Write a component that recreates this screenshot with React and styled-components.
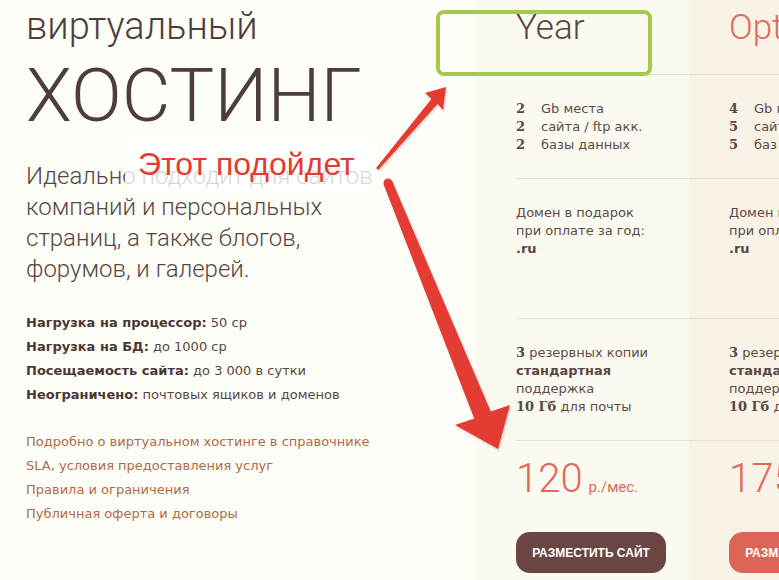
import React from "react";
import styled, { createGlobalStyle } from "styled-components";

const GlobalStyle = createGlobalStyle`
  html, body {
    margin: 0;
    padding: 0;
    background: #fefef8;
  }
  body {
    width: 779px;
    height: 580px;
    overflow: hidden;
    font-family: "DejaVu Sans", Verdana, sans-serif;
  }
`;

const plans = [
  {
    name: "Year",
    accent: false,
    specs: [
      ["2", "Gb места"],
      ["2", "сайта / ftp акк."],
      ["2", "базы данных"],
    ],
    price: "120",
  },
  {
    name: "Optimal",
    accent: true,
    specs: [
      ["4", "Gb места"],
      ["5", "сайтов / ftp акк."],
      ["5", "баз данных"],
    ],
    price: "175",
  },
];

function App() {
  return (
    <Page>
      <GlobalStyle />
      <Left>
        <Kicker>виртуальный</Kicker>
        <Title>ХОСТИНГ</Title>
        <Lead>
          Идеально подходит для сайтов компаний и персональных страниц, а также
          блогов, форумов, и галерей.
        </Lead>
        <Specs>
          <li><b>Нагрузка на процессор:</b> 50 ср</li>
          <li><b>Нагрузка на БД:</b> до 1000 ср</li>
          <li><b>Посещаемость сайта:</b> до 3 000 в сутки</li>
          <li><b>Неограничено:</b> почтовых ящиков и доменов</li>
        </Specs>
        <Links>
          <li><a>Подробно о виртуальном хостинге в справочнике</a></li>
          <li><a>SLA, условия предоставления услуг</a></li>
          <li><a>Правила и ограничения</a></li>
          <li><a>Публичная оферта и договоры</a></li>
        </Links>
      </Left>
      <Table>
        {plans.map((p, i) => (
          <Column key={p.name} $tint={p.accent}>
            <Cell $first={i === 0} $h={75} $pad={10}>
              <PlanName $accent={p.accent}>{p.name}</PlanName>
            </Cell>
            <Cell $first={i === 0} $h={104}>
              {p.specs.map(([n, t]) => (
                <SpecRow key={t}>
                  <Qty>{n}</Qty>
                  <span>{t}</span>
                </SpecRow>
              ))}
            </Cell>
            <Cell $first={i === 0} $h={140}>
              Домен в подарок<br />при оплате за год:<br /><Strong>.ru</Strong>
            </Cell>
            <Cell $first={i === 0} $h={122}>
              <Num>3</Num> резервных копии<br />
              <Strong>стандартная</Strong><br />
              поддержка<br />
              <Num>10 Гб</Num> для почты
            </Cell>
            <Cell $first={i === 0} $pad={18} $last>
              <Price>
                {p.price}
                <Unit>р./мес.</Unit>
              </Price>
              <Button $accent={p.accent}>Разместить сайт</Button>
            </Cell>
          </Column>
        ))}
      </Table>

      <Label>Этот подойдет</Label>
      <Marks width="779" height="580" viewBox="0 0 779 580">
        <defs>
          <filter id="sh" x="-20%" y="-20%" width="140%" height="140%">
            <feDropShadow dx="1" dy="1.5" stdDeviation="1" floodColor="#000" floodOpacity="0.18" />
          </filter>
        </defs>
        <rect x="438" y="12" width="212" height="62" rx="6" fill="none" stroke="#a5c94a" strokeWidth="4" />
        <g fill="#e43b31" filter="url(#sh)">
          <polygon points="376.9,167 431.4,98.9 425,93 446,87 443,110 437.6,104.1 379.1,169" />
          <circle cx="378" cy="168" r="1.6" />
          <polygon points="383.8,184.7 474.2,418.4 455,425 498,449 510,405 490.8,411.6 392.2,181.3" />
          <circle cx="388" cy="183" r="4.5" />
        </g>
      </Marks>
    </Page>
  );
}

export default App;

const Page = styled.div`
  position: relative;
  display: flex;
  width: 779px;
  height: 580px;
  overflow: hidden;
`;

const Left = styled.div`
  flex: none;
  width: 476px;
  box-sizing: border-box;
  padding-left: 26px;
  color: #4e3d3b;
`;

const Kicker = styled.div`
  margin-top: 7px;
  font-family: Roboto, "Liberation Sans", sans-serif;
  font-weight: 300;
  font-size: 38px;
  line-height: 1;
`;

const Title = styled.h1`
  margin: 13px 0 0;
  font-family: Roboto, "Liberation Sans", sans-serif;
  font-weight: 300;
  font-size: 75px;
  line-height: 74px;
`;

const Lead = styled.p`
  margin: 29px 0 0;
  width: 370px;
  font-family: Roboto, "Liberation Sans", sans-serif;
  font-weight: 300;
  font-size: 24px;
  line-height: 31px;
  color: #574644;
`;

const Specs = styled.ul`
  margin: 26px 0 0;
  padding: 0;
  list-style: none;
  font-size: 13px;
  line-height: 24px;
  color: #574644;
  b {
    color: #4a3834;
  }
`;

const Links = styled.ul`
  margin: 23px 0 0;
  padding: 0;
  list-style: none;
  font-size: 13px;
  line-height: 24px;
  a {
    color: #b06a44;
    cursor: pointer;
  }
`;

const Table = styled.div`
  flex: none;
  display: flex;
`;

const Column = styled.div`
  flex: none;
  width: 213px;
  height: 580px;
  background: ${(p) => (p.$tint ? "#f9f2e6" : "#fbfaf0")};
`;

const Cell = styled.div`
  box-sizing: border-box;
  height: ${(p) => (p.$h ? `${p.$h}px` : "auto")};
  margin-left: ${(p) => (p.$first ? "40px" : "0")};
  padding: ${(p) => p.$pad ?? 25}px 0 0 ${(p) => (p.$first ? "0" : "40px")};
  border-bottom: ${(p) => (p.$last ? "none" : "1px solid #e6e2d6")};
  font-size: 13px;
  line-height: 18px;
  color: #5b4a48;
  white-space: nowrap;
`;

const PlanName = styled.div`
  font-family: Roboto, "Liberation Sans", sans-serif;
  font-weight: 300;
  font-size: 35px;
  line-height: 1;
  color: ${(p) => (p.$accent ? "#e0695a" : "#5a4644")};
`;

const SpecRow = styled.div`
  display: flex;
`;

const Num = styled.b`
  font-family: "DejaVu Serif", Georgia, serif;
  font-size: 13px;
  color: #5a4644;
`;

const Qty = styled(Num)`
  flex: none;
  width: 25px;
`;

const Strong = styled.b`
  color: #5a4644;
`;

const Price = styled.div`
  font-family: Roboto, "Liberation Sans", sans-serif;
  font-weight: 300;
  font-size: 40px;
  line-height: 40px;
  color: #e0695a;
`;

const Unit = styled.span`
  margin-left: 6px;
  font-weight: 400;
  font-size: 15px;
`;

const Button = styled.button`
  margin-top: 25px;
  width: 150px;
  height: 41px;
  border: none;
  border-radius: 14px;
  background: ${(p) => (p.$accent ? "#dc6656" : "#6a4544")};
  color: #fff;
  font-family: "Liberation Sans", Arial, sans-serif;
  font-weight: 700;
  font-size: 12px;
  text-transform: uppercase;
  white-space: nowrap;
  cursor: pointer;
`;

const Label = styled.div`
  position: absolute;
  left: 125px;
  top: 140px;
  width: 253px;
  height: 50px;
  box-sizing: border-box;
  padding: 8px 0 0 13px;
  background: rgba(255, 255, 255, 0.78);
  color: #e43b31;
  font-family: "Liberation Sans", Arial, sans-serif;
  font-size: 32px;
  line-height: 32px;
  white-space: nowrap;
`;

const Marks = styled.svg`
  position: absolute;
  left: 0;
  top: 0;
  pointer-events: none;
`;
